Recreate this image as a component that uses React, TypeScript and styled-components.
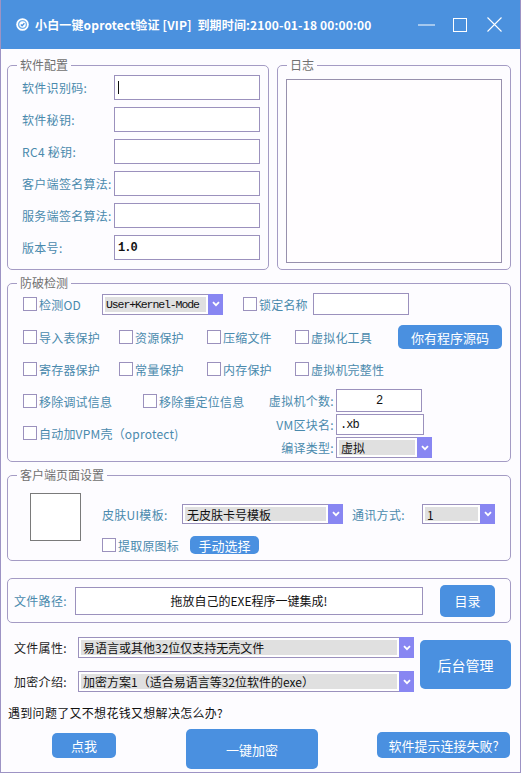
import React from "react";
import styled, { createGlobalStyle } from "styled-components";

const GlobalStyle = createGlobalStyle`
  html, body { margin: 0; padding: 0; background: #ffffff; }
  body { font-family: "Noto Sans CJK SC", "Noto Sans", sans-serif; }
  * { box-sizing: border-box; }
`;

const TEAL = "#4a8aad";
const FRAME = "#a49bc4";
const BLUE = "#4a90e0";

const Window = styled.div`
  width: 521px;
  height: 773px;
  display: flex;
  flex-direction: column;
  background: #fdfcff;
  border: 1px solid #9d93c4;
  border-top: none;
  overflow: hidden;
`;

const TitleBar = styled.div`
  height: 49px;
  flex: none;
  margin: 0 -1px;
  padding-left: 16px;
  background: #4b91de;
  color: #ffffff;
  display: flex;
  align-items: center;
`;

const TitleText = styled.span`
  margin-left: 6px;
  font-size: 12px;
  font-weight: 600;
  letter-spacing: 0.15px;
  white-space: pre;
`;

const Controls = styled.div`
  margin-left: auto;
  margin-right: 10px;
  display: flex;
  align-items: center;
`;

const Control = styled.div`
  width: 34px;
  height: 30px;
  display: flex;
  align-items: center;
  justify-content: center;
`;

const Body = styled.div`
  flex: 1;
  padding: 16px 9px 0 6px;
  display: flex;
  flex-direction: column;
`;

const TopRow = styled.div`
  display: flex;
  gap: 8px;
`;

const Group = styled.div<{ $w?: number; $h: number; $mt?: number }>`
  width: ${(p) => (p.$w ? `${p.$w}px` : "auto")};
  height: ${(p) => p.$h}px;
  margin-top: ${(p) => p.$mt ?? 0}px;
  flex: none;
  border: 1px solid ${FRAME};
  border-radius: 5px;
  display: flex;
  flex-direction: column;
`;

const Legend = styled.div`
  align-self: flex-start;
  margin: -8px 0 0 9px;
  padding: 0 3px;
  background: #fdfcff;
  font-size: 12px;
  line-height: 14px;
  color: #707070;
`;

const FormRows = styled.div`
  padding: 3px 0 0 14px;
  display: flex;
  flex-direction: column;
  gap: 7px;
`;

const FormRow = styled.div`
  height: 25px;
  display: flex;
  align-items: center;
`;

const Label = styled.span<{ $w?: number; $right?: boolean; $dark?: boolean }>`
  width: ${(p) => (p.$w ? `${p.$w}px` : "auto")};
  flex: none;
  font-size: 12px;
  letter-spacing: 0.3px;
  color: ${(p) => (p.$dark ? "#1e1e1e" : TEAL)};
  text-align: ${(p) => (p.$right ? "right" : "left")};
  padding-right: ${(p) => (p.$right ? 2 : 0)}px;
  white-space: nowrap;
`;

const TextBox = styled.div<{ $w: number; $h: number; $center?: boolean; $bold?: boolean }>`
  width: ${(p) => p.$w}px;
  height: ${(p) => p.$h}px;
  flex: none;
  border: 1px solid #9b91bd;
  background: #ffffff;
  display: flex;
  align-items: center;
  justify-content: ${(p) => (p.$center ? "center" : "flex-start")};
  padding-left: ${(p) => (p.$center ? 0 : 3)}px;
  font-family: "Liberation Mono", "DejaVu Sans Mono", monospace;
  font-size: 12px;
  font-weight: ${(p) => (p.$bold ? 700 : 400)};
  letter-spacing: -1px;
  color: #111111;
`;

const Caret = styled.span`
  width: 1px;
  height: 13px;
  background: #111111;
`;

const LogBox = styled.div`
  width: 216px;
  height: 184px;
  margin: 7px 0 0 8px;
  border: 1px solid #9790ad;
  background: #fffdff;
`;

const SelectBox = styled.div<{ $w: number; $h: number }>`
  width: ${(p) => p.$w}px;
  height: ${(p) => p.$h}px;
  flex: none;
  border: 1px solid #9b91bd;
  background: #ffffff;
  display: flex;
`;

const SelectValue = styled.div<{ $mono?: boolean }>`
  flex: 1;
  min-width: 0;
  margin: 2px;
  background: #e0e0e0;
  display: flex;
  align-items: center;
  padding-left: ${(p) => (p.$mono ? 1 : 2)}px;
  overflow: hidden;
  white-space: nowrap;
  font-size: ${(p) => (p.$mono ? 11.5 : 12)}px;
  font-family: ${(p) =>
    p.$mono
      ? `"Liberation Mono", "DejaVu Sans Mono", monospace`
      : `"Noto Sans CJK SC", sans-serif`};
  letter-spacing: ${(p) => (p.$mono ? "-1.1px" : "0")};
  color: #111111;
`;

const SelectArrow = styled.div`
  width: 15px;
  flex: none;
  margin: -1px -1px -1px 0;
  background: #8886f2;
  display: flex;
  align-items: center;
  justify-content: center;
`;

const Chevron = () => (
  <svg width="8" height="6" viewBox="0 0 8 6">
    <path d="M1 1.2 L4 4.2 L7 1.2" fill="none" stroke="#ffffff" strokeWidth="1.8" />
  </svg>
);

const Select: React.FC<{ w: number; h: number; value: string; mono?: boolean }> = ({
  w,
  h,
  value,
  mono,
}) => (
  <SelectBox $w={w} $h={h}>
    <SelectValue $mono={mono}>{value}</SelectValue>
    <SelectArrow>
      <Chevron />
    </SelectArrow>
  </SelectBox>
);

const CheckCell = styled.label<{ $w?: number }>`
  width: ${(p) => (p.$w ? `${p.$w}px` : "auto")};
  flex: none;
  display: flex;
  align-items: center;
  font-size: 12px;
  letter-spacing: 0.2px;
  color: ${TEAL};
  white-space: nowrap;
`;

const Box = styled.span`
  width: 14px;
  height: 14px;
  flex: none;
  margin-right: 2px;
  border: 1px solid #9b91bd;
  background: #ffffff;
`;

const Check: React.FC<{ w?: number; text: string }> = ({ w, text }) => (
  <CheckCell $w={w}>
    <Box />
    {text}
  </CheckCell>
);

const Button = styled.div<{ $w: number; $h: number; $fs?: number; $ml?: number; $mt?: number }>`
  width: ${(p) => p.$w}px;
  height: ${(p) => p.$h}px;
  flex: none;
  margin-left: ${(p) => p.$ml ?? 0}px;
  margin-top: ${(p) => p.$mt ?? 0}px;
  background: ${BLUE};
  border-radius: 5px;
  color: #ffffff;
  font-size: ${(p) => p.$fs ?? 13}px;
  display: flex;
  align-items: center;
  justify-content: center;
  white-space: nowrap;
`;

const GuardContent = styled.div`
  padding: 3px 0 0 15px;
  display: flex;
  flex-direction: column;
`;

const GuardRow = styled.div<{ $h: number; $mt?: number }>`
  height: ${(p) => p.$h}px;
  margin-top: ${(p) => p.$mt ?? 0}px;
  display: flex;
  align-items: center;
`;

const Spacer = styled.div<{ $w: number }>`
  width: ${(p) => p.$w}px;
  flex: none;
`;

const SplitSection = styled.div`
  margin-top: 8px;
  display: flex;
`;

const LeftCol = styled.div`
  width: 239px;
  display: flex;
  flex-direction: column;
  gap: 8px;
`;

const RightCol = styled.div`
  display: flex;
  flex-direction: column;
  gap: 2px;
`;

const PairRow = styled.div<{ $h: number; $mt?: number }>`
  height: ${(p) => p.$h}px;
  margin-top: ${(p) => p.$mt ?? 0}px;
  display: flex;
  align-items: center;
`;

const ClientContent = styled.div`
  padding: 11px 0 0 22px;
  display: flex;
  align-items: flex-start;
`;

const IconBox = styled.div`
  width: 51px;
  height: 48px;
  flex: none;
  border: 1px solid #7a7a7a;
  background: #ffffff;
`;

const ClientRight = styled.div`
  margin: 11px 0 0 21px;
  display: flex;
  flex-direction: column;
`;

const PathContent = styled.div`
  height: 100%;
  padding-left: 6px;
  display: flex;
  align-items: center;
`;

const DropZone = styled.div`
  width: 348px;
  height: 28px;
  flex: none;
  border: 1px solid #9b91bd;
  background: #ffffff;
  display: flex;
  align-items: center;
  justify-content: center;
  font-size: 12px;
  color: #111111;
`;

const AttrSection = styled.div`
  margin-top: 14px;
  padding-left: 7px;
  display: flex;
  align-items: flex-start;
`;

const AttrCol = styled.div`
  display: flex;
  flex-direction: column;
  gap: 13px;
`;

const Question = styled.div`
  margin-top: 13px;
  padding-left: 1px;
  font-size: 12px;
  line-height: 16px;
  letter-spacing: 0.3px;
  color: #111111;
`;

const ActionRow = styled.div`
  margin-top: 8px;
  padding-left: 45px;
  display: flex;
  align-items: flex-start;
`;

const AppIcon = () => (
  <svg width="13" height="13" viewBox="0 0 13 13">
    <circle cx="6.5" cy="6.5" r="6.3" fill="#ffffff" />
    <circle cx="6.5" cy="6.5" r="3.9" fill="none" stroke="#6fb0ee" strokeWidth="1.4" />
    <path d="M4.8 6.6 L6.1 7.8 L8.4 5.2" fill="none" stroke="#4b91de" strokeWidth="1.3" />
  </svg>
);

export default function App() {
  return (
    <>
      <GlobalStyle />
      <Window>
        <TitleBar>
          <AppIcon />
          <TitleText>小白一键oprotect验证 [VIP]  到期时间:2100-01-18 00:00:00</TitleText>
          <Controls>
            <Control>
              <svg width="17" height="2" viewBox="0 0 17 2">
                <line x1="0" y1="1" x2="17" y2="1" stroke="#ffffff" strokeWidth="1" />
              </svg>
            </Control>
            <Control>
              <svg width="14" height="14" viewBox="0 0 14 14">
                <rect x="0.5" y="0.5" width="13" height="13" fill="none" stroke="#ffffff" strokeWidth="1" />
              </svg>
            </Control>
            <Control>
              <svg width="15" height="15" viewBox="0 0 15 15">
                <path d="M0.5 0.5 L14.5 14.5 M14.5 0.5 L0.5 14.5" stroke="#ffffff" strokeWidth="1.1" />
              </svg>
            </Control>
          </Controls>
        </TitleBar>

        <Body>
          <TopRow>
            <Group $w={262} $h={205}>
              <Legend>软件配置</Legend>
              <FormRows>
                <FormRow>
                  <Label $w={92}>软件识别码:</Label>
                  <TextBox $w={146} $h={25}>
                    <Caret />
                  </TextBox>
                </FormRow>
                <FormRow>
                  <Label $w={92}>软件秘钥:</Label>
                  <TextBox $w={146} $h={25} />
                </FormRow>
                <FormRow>
                  <Label $w={92}>RC4 秘钥:</Label>
                  <TextBox $w={146} $h={25} />
                </FormRow>
                <FormRow>
                  <Label $w={92}>客户端签名算法:</Label>
                  <TextBox $w={146} $h={25} />
                </FormRow>
                <FormRow>
                  <Label $w={92}>服务端签名算法:</Label>
                  <TextBox $w={146} $h={25} />
                </FormRow>
                <FormRow>
                  <Label $w={92}>版本号:</Label>
                  <TextBox $w={146} $h={25} $bold>
                    1.0
                  </TextBox>
                </FormRow>
              </FormRows>
            </Group>
            <Group $w={234} $h={205}>
              <Legend>日志</Legend>
              <LogBox />
            </Group>
          </TopRow>

          <Group $h={179} $mt={13}>
            <Legend>防破检测</Legend>
            <GuardContent>
              <GuardRow $h={22}>
                <Check w={79} text="检测OD" />
                <Select w={121} h={21} value="User+Kernel-Mode" mono />
                <Spacer $w={20} />
                <Check w={70} text="锁定名称" />
                <TextBox $w={96} $h={22} />
              </GuardRow>
              <GuardRow $h={24} $mt={10}>
                <Check w={96} text="导入表保护" />
                <Check w={88} text="资源保护" />
                <Check w={88} text="压缩文件" />
                <Check w={103} text="虚拟化工具" />
                <Button $w={104} $h={24}>
                  你有程序源码
                </Button>
              </GuardRow>
              <GuardRow $h={24} $mt={8}>
                <Check w={96} text="寄存器保护" />
                <Check w={88} text="常量保护" />
                <Check w={88} text="内存保护" />
                <Check w={103} text="虚拟机完整性" />
              </GuardRow>
              <SplitSection>
                <LeftCol>
                  <PairRow $h={24}>
                    <Check w={120} text="移除调试信息" />
                    <Check text="移除重定位信息" />
                  </PairRow>
                  <PairRow $h={24}>
                    <Check text="自动加VPM壳（oprotect)" />
                  </PairRow>
                </LeftCol>
                <RightCol>
                  <PairRow $h={23}>
                    <Label $w={74} $right>
                      虚拟机个数:
                    </Label>
                    <TextBox $w={86} $h={23} $center>
                      2
                    </TextBox>
                  </PairRow>
                  <PairRow $h={21}>
                    <Label $w={74} $right>
                      VM区块名:
                    </Label>
                    <TextBox $w={88} $h={21}>
                      .xb
                    </TextBox>
                  </PairRow>
                  <PairRow $h={21}>
                    <Label $w={74} $right>
                      编译类型:
                    </Label>
                    <Select w={96} h={21} value="虚拟" />
                  </PairRow>
                </RightCol>
              </SplitSection>
            </GuardContent>
          </Group>

          <Group $h={86} $mt={13}>
            <Legend>客户端页面设置</Legend>
            <ClientContent>
              <IconBox />
              <ClientRight>
                <PairRow $h={20}>
                  <Label $w={80}>皮肤UI模板:</Label>
                  <Select w={161} h={20} value="无皮肤卡号模板" />
                  <Spacer $w={9} />
                  <Label $w={70}>通讯方式:</Label>
                  <Select w={73} h={20} value="1" />
                </PairRow>
                <PairRow $h={18} $mt={12}>
                  <Check w={88} text="提取原图标" />
                  <Button $w={69} $h={18}>
                    手动选择
                  </Button>
                </PairRow>
              </ClientRight>
            </ClientContent>
          </Group>

          <Group $h={45} $mt={17}>
            <PathContent>
              <Label $w={61}>文件路径:</Label>
              <DropZone>拖放自己的EXE程序一键集成!</DropZone>
              <Button $w={55} $h={32} $ml={17}>
                目录
              </Button>
            </PathContent>
          </Group>

          <AttrSection>
            <AttrCol>
              <PairRow $h={21}>
                <Label $w={64} $dark>
                  文件属性:
                </Label>
                <Select w={336} h={21} value="易语言或其他32位仅支持无壳文件" />
              </PairRow>
              <PairRow $h={21}>
                <Label $w={64} $dark>
                  加密介绍:
                </Label>
                <Select w={336} h={21} value="加密方案1（适合易语言等32位软件的exe）" />
              </PairRow>
            </AttrCol>
            <Button $w={91} $h={49} $ml={6} $mt={3} $fs={14}>
              后台管理
            </Button>
          </AttrSection>

          <Question>遇到问题了又不想花钱又想解决怎么办?</Question>

          <ActionRow>
            <Button $w={64} $h={25} $mt={4}>
              点我
            </Button>
            <Button $w={132} $h={40} $ml={70}>
              一键加密
            </Button>
            <Button $w={133} $h={26} $ml={59} $mt={3}>
              软件提示连接失败?
            </Button>
          </ActionRow>
        </Body>
      </Window>
    </>
  );
}
